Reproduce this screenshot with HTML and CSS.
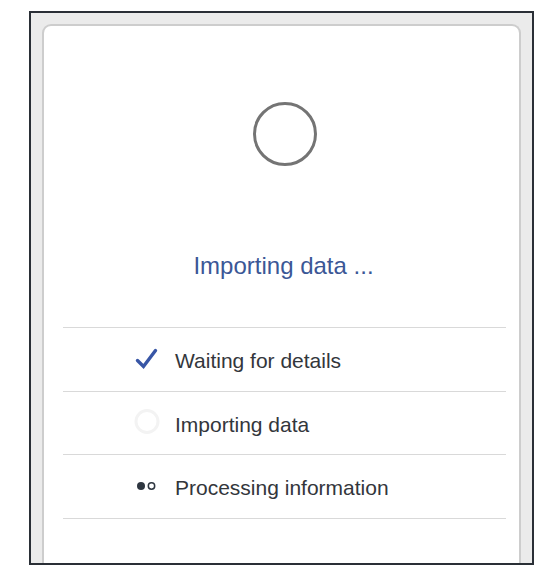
FILE: index.html
```html
<!DOCTYPE html>
<html>
<head>
<meta charset="utf-8">
<link rel="stylesheet" href="styles.css">
</head>
<body>
<div class="frame">
  <div class="card">
    <div class="spinner-wrap">
      <svg class="spinner" width="68" height="68" viewBox="0 0 68 68">
        <circle cx="34" cy="34" r="30.5" fill="none" stroke="#747474" stroke-width="3"/>
      </svg>
    </div>
    <h1 class="title">Importing data ...</h1>
    <ul class="steps">
      <li class="step">
        <span class="icon">
          <svg width="26" height="24" viewBox="0 0 26 24">
            <path d="M3.5 13.5 L9.5 19.5 L21.5 3.5" fill="none" stroke="#3856a6" stroke-width="3.4" stroke-linecap="round" stroke-linejoin="miter"/>
          </svg>
        </span>
        <span class="label">Waiting for details</span>
      </li>
      <li class="step">
        <span class="icon">
          <svg width="28" height="28" viewBox="0 0 28 28">
            <circle cx="13" cy="12.5" r="11" fill="none" stroke="#f3f3f3" stroke-width="3"/>
          </svg>
        </span>
        <span class="label">Importing data</span>
      </li>
      <li class="step">
        <span class="icon">
          <svg width="26" height="12" viewBox="0 0 26 12">
            <circle cx="7" cy="6" r="4" fill="#2e3640"/>
            <circle cx="17.5" cy="6" r="3.2" fill="none" stroke="#2e3640" stroke-width="1.5"/>
          </svg>
        </span>
        <span class="label">Processing information</span>
      </li>
    </ul>
  </div>
</div>
</body>
</html>
```

FILE: styles.css
```css
html, body {
  margin: 0;
  padding: 0;
  background: #ffffff;
}

body {
  font-family: "Liberation Sans", Arial, Helvetica, sans-serif;
}

.frame {
  box-sizing: border-box;
  margin: 11px 0 0 29px;
  width: 505px;
  height: 554px;
  border: 2px solid #2a2f36;
  background: #ebebeb;
  padding: 11px 11px 0 11px;
  display: flex;
  flex-direction: column;
}

.card {
  flex: 1;
  background: #ffffff;
  border: 2px solid #cdcdcd;
  border-bottom: none;
  border-radius: 9px 9px 0 0;
  padding: 74px 13px 0 19px;
}

.spinner-wrap {
  display: flex;
  justify-content: center;
}

.spinner {
  display: block;
}

.title {
  margin: 83px 0 0 0;
  text-align: center;
  font-weight: normal;
  font-size: 24px;
  line-height: 30px;
  color: #3b5796;
  padding-right: 2px;
}

.steps {
  list-style: none;
  margin: 46px 0 0 0;
  padding: 0;
  border-top: 1px solid #d9d9d9;
}

.step {
  display: flex;
  align-items: center;
  height: 62.5px;
  border-bottom: 1px solid #d9d9d9;
  padding-left: 71px;
}

.icon {
  width: 31px;
  display: flex;
  justify-content: flex-start;
  align-items: center;
  margin-right: 10px;
}

.icon svg {
  display: block;
}

.label {
  font-size: 21px;
  color: #33363b;
  padding-top: 4px;
}
```
